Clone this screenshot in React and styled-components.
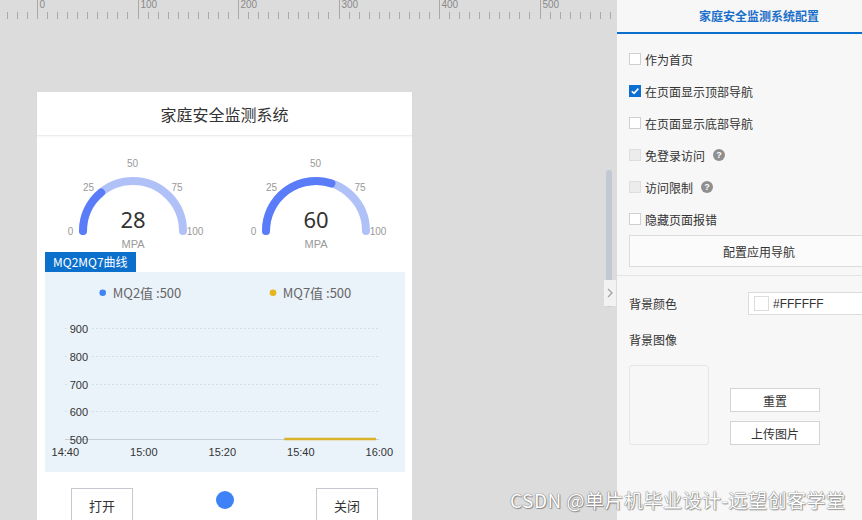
import React from 'react';
import styled, { createGlobalStyle } from 'styled-components';

const GlobalStyle = createGlobalStyle`
  body {
    margin: 0;
    overflow: hidden;
    font-family: "Noto Sans CJK SC", "Noto Sans", sans-serif;
  }
`;

const Page = styled.div`
  position: relative;
  display: flex;
  width: 862px;
  height: 520px;
  overflow: hidden;
`;

const Canvas = styled.div`
  position: relative;
  flex: 0 0 617px;
  background: #dcdcdc;
  overflow: hidden;
`;

const RulerBar = styled.div`
  height: 20px;
  flex: none;
`;

const Stage = styled.div`
  padding: 72px 0 0 37px;
`;

const Card = styled.div`
  width: 375px;
  background: #fff;
  color: #333;
`;

const CardHeader = styled.div`
  height: 43px;
  display: flex;
  align-items: center;
  justify-content: center;
  font-size: 16px;
  border-bottom: 1px solid #ececec;
  box-shadow: 0 1px 2px rgba(0, 0, 0, 0.04);
`;

const GaugeRow = styled.div`
  display: flex;
  gap: 43px;
  height: 116px;
  box-sizing: border-box;
  padding: 18px 0 0 26px;
`;

const ChartSection = styled.div`
  padding: 0 7px 0 8px;
`;

const ChartTag = styled.div`
  width: fit-content;
  height: 20px;
  line-height: 20px;
  padding: 0 8px;
  background: #0b6fcc;
  color: #fff;
  font-size: 12px;
`;

const ChartBox = styled.div`
  height: 200px;
  background: #eaf2fa;
`;

const Controls = styled.div`
  display: flex;
  align-items: flex-start;
  justify-content: space-between;
  padding: 0 34px;
  margin-top: 16px;
`;

const OutlineButton = styled.button`
  width: 62px;
  height: 34px;
  background: #fff;
  border: 1px solid #c8c8d0;
  color: #333;
  font-family: inherit;
  font-size: 13px;
  padding: 0;
`;

const Lamp = styled.span`
  width: 18px;
  height: 18px;
  margin-top: 3px;
  border-radius: 50%;
  background: ${p => p.$on ? '#3d82f7' : '#bbb'};
`;

const ScrollThumb = styled.div`
  position: absolute;
  right: 5px;
  top: 170px;
  width: 6px;
  height: 137px;
  border-radius: 3px;
  background: #c3c9d2;
`;

const CollapseTab = styled.div`
  position: absolute;
  right: 1px;
  top: 280px;
  width: 12px;
  height: 26px;
  background: #f2f2f2;
  display: flex;
  align-items: center;
  justify-content: center;
`;

const Panel = styled.div`
  flex: 0 0 284px;
  background: #f7f7f7;
  color: #333;
  font-size: 12px;
`;

const PanelTitle = styled.div`
  height: 32px;
  line-height: 31px;
  text-align: center;
  color: #1a6fc9;
  font-weight: bold;
  font-size: 12px;
  border-bottom: 2px solid #0a6fcc;
`;

const Options = styled.div`
  padding: 9px 12px 8px;
  border-bottom: 1px solid #e4e4e4;
`;

const OptionRow = styled.label`
  height: 32px;
  display: flex;
  align-items: center;
`;

const Box = styled.span`
  width: 12px;
  height: 12px;
  box-sizing: border-box;
  margin-right: 4px;
  display: flex;
  align-items: center;
  justify-content: center;
  border: 1px solid ${p => p.$checked ? '#0d6fd1' : p.$disabled ? '#dedede' : '#d0d0d0'};
  background: ${p => p.$checked ? '#0d6fd1' : p.$disabled ? '#ececec' : '#fff'};
`;

const Help = styled.span`
  width: 12px;
  height: 12px;
  margin-left: 8px;
  border-radius: 50%;
  background: #8f8f8f;
  color: #fff;
  font: bold 9px/12px "Liberation Sans", sans-serif;
  text-align: center;
`;

const WideButton = styled.button`
  display: block;
  width: 260px;
  height: 32px;
  background: #fbfbfb;
  border: 1px solid #dcdcdc;
  color: #333;
  font-family: inherit;
  font-size: 12px;
  padding: 0;
`;

const Section = styled.div`
  padding: 16px 12px 0;
`;

const FieldRow = styled.div`
  display: flex;
  align-items: center;
`;

const FieldLabel = styled.div`
  width: 119px;
  line-height: 20px;
  margin-top: ${p => p.$top || 0}px;
`;

const ColorInput = styled.div`
  flex: 1;
  height: 23px;
  box-sizing: border-box;
  display: flex;
  align-items: center;
  gap: 4px;
  padding-left: 5px;
  background: #fff;
  border: 1px solid #dcdcdc;
  font: 12px "Liberation Sans", sans-serif;
`;

const Swatch = styled.span`
  width: 15px;
  height: 15px;
  box-sizing: border-box;
  border: 1px solid #ddd;
  background: ${p => p.$color};
`;

const ImageRow = styled.div`
  display: flex;
  align-items: flex-end;
  gap: 21px;
  margin-top: 15px;
`;

const ImageBox = styled.div`
  width: 80px;
  height: 80px;
  box-sizing: border-box;
  border: 1px solid #e6e6e6;
  border-radius: 3px;
`;

const ButtonStack = styled.div`
  display: flex;
  flex-direction: column;
  gap: 9px;
`;

const SmallButton = styled.button`
  width: 90px;
  height: 24px;
  background: #fff;
  border: 1px solid #d4d4d4;
  color: #333;
  font-family: inherit;
  font-size: 12px;
  padding: 0;
`;

const Watermark = styled.div`
  position: absolute;
  left: 510px;
  top: 486px;
  font-size: 19px;
  letter-spacing: 0.5px;
  color: #fff;
  white-space: nowrap;
  text-shadow: 0 0 1px #777, 0 0 1px #777, 1px 1px 1px rgba(0, 0, 0, 0.35);
`;

function Ruler() {
  const ticks = [];
  for (let i = -3; i < 59; i++) {
    const x = Math.round(37 + i * 10.05) + 0.5;
    const major = i % 10 === 0;
    ticks.push(<line key={i} x1={x} x2={x} y1={major ? 0 : 12} y2={19} stroke="#a9a9a9" />);
    if (major && i >= 0) {
      ticks.push(
        <text key={'t' + i} x={x + 2} y={8} fontSize="10" fill="#8a8a8a" fontFamily="Liberation Sans, sans-serif">
          {i * 10}
        </text>
      );
    }
  }
  return (
    <RulerBar>
      <svg width="617" height="20" shapeRendering="crispEdges" style={{ display: 'block' }}>
        {ticks}
      </svg>
    </RulerBar>
  );
}

function Gauge({ value }) {
  const t = Math.PI - (Math.PI * value) / 100;
  const x = 70 + 50 * Math.cos(t);
  const y = 77 - 50 * Math.sin(t);
  const label = { fontSize: 10, fill: '#999', textAnchor: 'middle', dominantBaseline: 'central', fontFamily: 'Liberation Sans, sans-serif' };
  return (
    <svg width="140" height="100" overflow="visible">
      <path d="M 20 77 A 50 50 0 0 1 120 77" fill="none" stroke="#b0c1f8" strokeWidth="8" strokeLinecap="round" />
      <path d={`M 20 77 A 50 50 0 0 1 ${x} ${y}`} fill="none" stroke="#5a7cf8" strokeWidth="8" strokeLinecap="round" />
      <text x="7.5" y="77" style={label}>0</text>
      <text x="25.5" y="33" style={label}>25</text>
      <text x="69.5" y="9" style={label}>50</text>
      <text x="114" y="33" style={label}>75</text>
      <text x="132" y="77" style={label}>100</text>
      <text x="70" y="65" fontSize="22" fill="#333" textAnchor="middle" dominantBaseline="central" fontFamily="Noto Sans, sans-serif">{value}</text>
      <text x="70" y="90" style={{ ...label, fontSize: 11 }}>MPA</text>
    </svg>
  );
}

function Chart() {
  const rows = [900, 800, 700, 600, 500];
  const times = ['14:40', '15:00', '15:20', '15:40', '16:00'];
  const axis = { fontSize: 11, fill: '#333', fontFamily: 'Liberation Sans, sans-serif', dominantBaseline: 'central' };
  return (
    <svg width="360" height="200" style={{ display: 'block' }}>
      <circle cx="57.7" cy="20.7" r="3.3" fill="#3f85f6" />
      <text x="67.7" y="20.7" fontSize="13" fill="#666" dominantBaseline="central">MQ2值 :500</text>
      <circle cx="228" cy="20.7" r="3.3" fill="#e5b51c" />
      <text x="237.7" y="20.7" fontSize="13" fill="#666" dominantBaseline="central">MQ7值 :500</text>
      {rows.map((v, i) => {
        const y = Math.round(56 + i * 27.75) + 0.5;
        return (
          <g key={v}>
            {v === 500 ? (
              <line x1="20" x2="334" y1={y} y2={y} stroke="#c6ceda" />
            ) : (
              <>
                <line x1="20" x2="24" y1={y} y2={y} stroke="#cdd6e2" strokeDasharray="1.5 2.5" />
                <line x1="47" x2="334" y1={y} y2={y} stroke="#cdd6e2" strokeDasharray="1.5 2.5" />
              </>
            )}
            <text x="43" y={y} textAnchor="end" style={axis}>{v}</text>
          </g>
        );
      })}
      <line x1="239.3" x2="331" y1="167" y2="167" stroke="#dab22a" strokeWidth="2.7" />
      {times.map((t, i) => (
        <text key={t} x={20.3 + i * 78.5} y="180" textAnchor="middle" style={axis}>{t}</text>
      ))}
    </svg>
  );
}

const options = [
  { text: '作为首页' },
  { text: '在页面显示顶部导航', checked: true },
  { text: '在页面显示底部导航' },
  { text: '免登录访问', disabled: true, help: true },
  { text: '访问限制', disabled: true, help: true },
  { text: '隐藏页面报错' },
];

export default function App() {
  return (
    <Page>
      <GlobalStyle />
      <Canvas>
        <Ruler />
        <Stage>
          <Card>
            <CardHeader>家庭安全监测系统</CardHeader>
            <GaugeRow>
              <Gauge value={28} />
              <Gauge value={60} />
            </GaugeRow>
            <ChartSection>
              <ChartTag>MQ2MQ7曲线</ChartTag>
              <ChartBox>
                <Chart />
              </ChartBox>
            </ChartSection>
            <Controls>
              <OutlineButton>打开</OutlineButton>
              <Lamp $on />
              <OutlineButton>关闭</OutlineButton>
            </Controls>
          </Card>
        </Stage>
        <ScrollThumb />
        <CollapseTab>
          <svg width="6" height="10" viewBox="0 0 6 10">
            <path d="M1 1 L5 5 L1 9" fill="none" stroke="#a0a0a0" strokeWidth="1.2" />
          </svg>
        </CollapseTab>
      </Canvas>
      <Panel>
        <PanelTitle>家庭安全监测系统配置</PanelTitle>
        <Options>
          {options.map(o => (
            <OptionRow key={o.text}>
              <Box $checked={o.checked} $disabled={o.disabled}>
                {o.checked && (
                  <svg width="10" height="10" viewBox="0 0 10 10">
                    <path d="M1.8 5.2 L4 7.4 L8.4 2.6" fill="none" stroke="#fff" strokeWidth="1.6" />
                  </svg>
                )}
              </Box>
              {o.text}
              {o.help && <Help>?</Help>}
            </OptionRow>
          ))}
          <WideButton>配置应用导航</WideButton>
        </Options>
        <Section>
          <FieldRow>
            <FieldLabel>背景颜色</FieldLabel>
            <ColorInput>
              <Swatch $color="#ffffff" />
              #FFFFFF
            </ColorInput>
          </FieldRow>
          <FieldLabel $top={15}>背景图像</FieldLabel>
          <ImageRow>
            <ImageBox />
            <ButtonStack>
              <SmallButton>重置</SmallButton>
              <SmallButton>上传图片</SmallButton>
            </ButtonStack>
          </ImageRow>
        </Section>
      </Panel>
      <Watermark>CSDN @单片机毕业设计-远望创客学堂</Watermark>
    </Page>
  );
}
